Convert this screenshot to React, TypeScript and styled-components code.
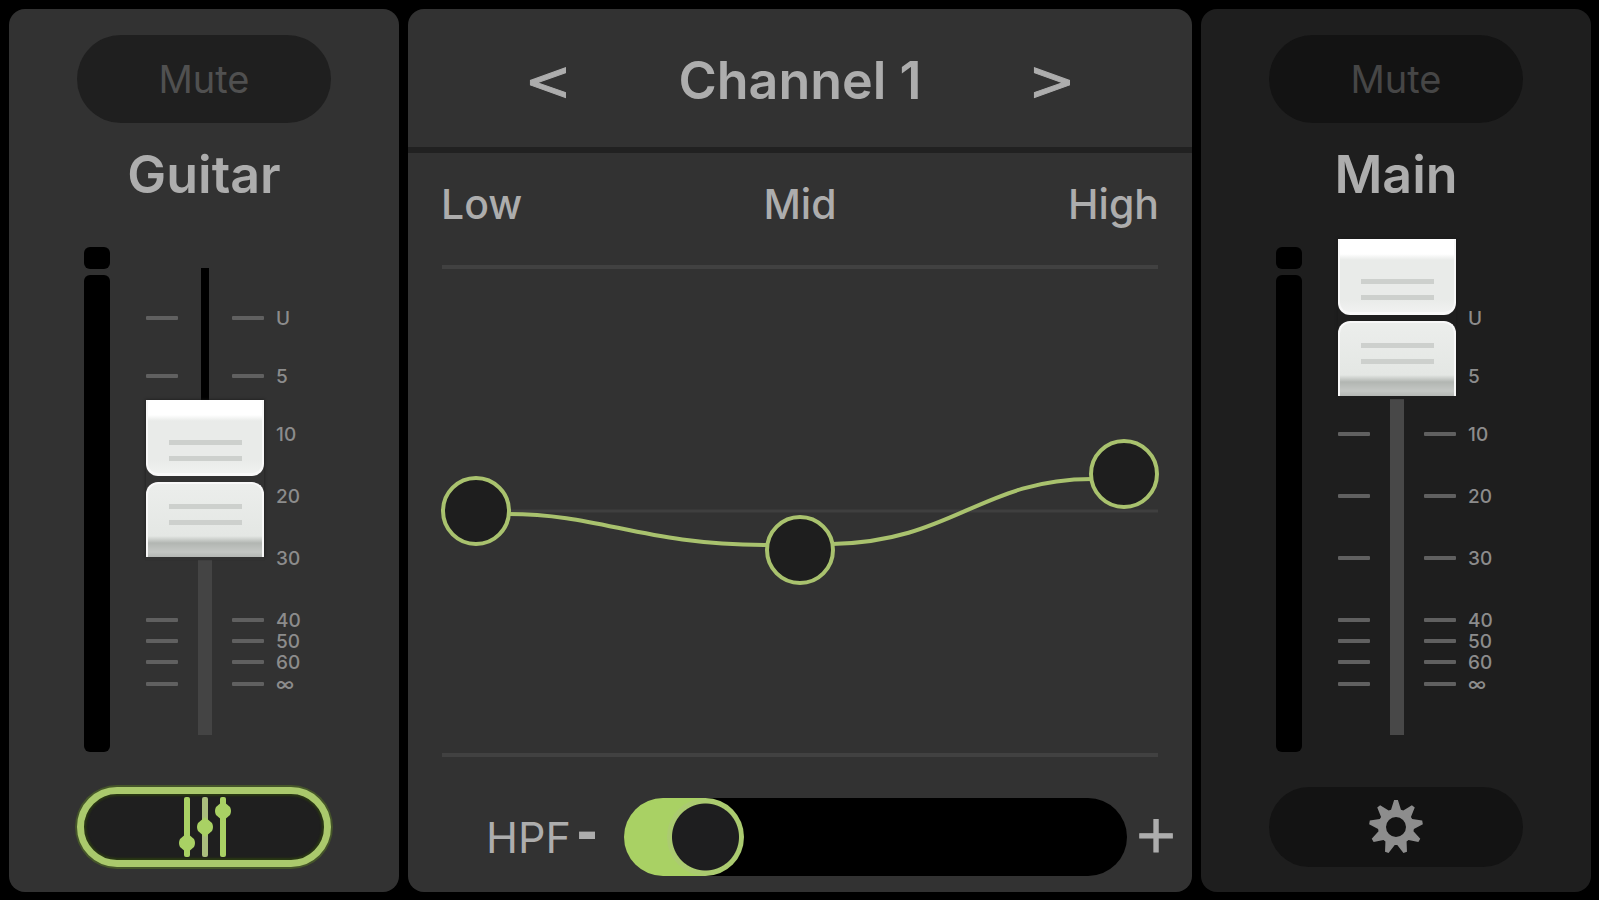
import React, { useState } from "react";
import styled, { createGlobalStyle, ThemeProvider } from "styled-components";

const channelTheme = { panel: "#323232", well: "#1f1f1f", muted: "#505050", rail: "#444444", tick: "#606060" };
const mainTheme = { panel: "#1e1e1e", well: "#131313", muted: "#464646", rail: "#484848", tick: "#606060" };

const GlobalStyle = createGlobalStyle`
  *, *::before, *::after { box-sizing: border-box; }
  body { margin: 0; background: #000; font-family: Inter, "Liberation Sans", sans-serif; color: #adadad; }
  button { font: inherit; color: inherit; border: 0; padding: 0; cursor: pointer; background: none; }
  h1, h2, ul { margin: 0; padding: 0; font: inherit; list-style: none; }
`;

const Mixer = styled.main`
  display: grid;
  grid-template-columns: 390fr 784fr 390fr;
  gap: 9px;
  min-height: 100vh;
  padding: 9px 8px 8px 9px;
`;

const Panel = styled.section`
  display: flex;
  flex-direction: column;
  min-width: 0;
  background: ${({ theme }) => theme.panel};
  border-radius: 16px;
`;

const StripPanel = styled(Panel)`
  align-items: center;
  padding: 26px 0 24px;
`;

const StripBody = styled.div`
  display: flex;
  flex-direction: column;
  width: 254px;
`;

const MuteButton = styled.button`
  height: 88px;
  border-radius: 44px;
  background: ${({ theme }) => theme.well};
  color: ${({ theme }) => theme.muted};
  font-size: 38px;
`;

const StripName = styled.h2`
  margin-top: 22px;
  line-height: 60px;
  font-size: 52px;
  font-weight: 600;
  text-align: center;
`;

const FaderArea = styled.div`
  display: grid;
  grid-template-columns: 26px 118px auto;
  column-gap: 36px;
  height: 505px;
  margin: 42px 0 0 7px;
`;

const Meter = styled.div`
  display: grid;
  grid-template-rows: 22px 1fr;
  row-gap: 6px;
`;

const MeterLamp = styled.span`
  border-radius: 6px;
  background: #000;
`;

const Fader = styled.div`
  position: relative;
  display: flex;
  justify-content: center;
  padding: 21px 0 17px;
`;

const Rail = styled.div`
  width: 14px;
  background: ${({ theme }) => theme.rail};
`;

const RailAbove = styled.div`
  width: 14px;
  border: solid ${({ theme }) => theme.panel};
  border-width: 0 3px;
  background: #000;
`;

const Scale = styled.ul`
  position: absolute;
  top: 59px;
  left: 0;
`;

const ScaleMark = styled.li<{ $gap: number }>`
  display: grid;
  grid-template-columns: 32px 32px 30px;
  column-gap: 54px;
  align-items: center;
  height: 21px;
  margin-top: ${({ $gap }) => $gap}px;
`;

const Tick = styled.span`
  height: 4px;
  border-radius: 1px;
  background: ${({ theme }) => theme.tick};
`;

const TickLabel = styled.span`
  margin-left: -42px;
  padding-top: 2px;
  font-size: 19px;
  line-height: 21px;
  font-weight: 500;
  color: #8c8c8c;
`;

const FaderInput = styled.input`
  position: absolute;
  inset: 0;
  width: 100%;
  height: 100%;
  margin: 0;
  opacity: 0;
  writing-mode: vertical-lr;
  direction: rtl;
  cursor: grab;
`;

const Cap = styled.div`
  position: absolute;
  left: 0;
  width: 118px;
  height: 157px;
  display: grid;
  grid-template-rows: 1fr 1fr;
  row-gap: 6px;
  background: linear-gradient(${({ theme }) => theme.panel}, ${({ theme }) => theme.panel}) 50% 50% / 100% 30px no-repeat;
  box-shadow: 0 3px 1px ${({ theme }) => theme.panel}, 0 0 3px #1a1a1a;
`;

const CapHalf = styled.div<{ $lower?: boolean }>`
  display: flex;
  flex-direction: column;
  align-items: center;
  gap: 11px;
  padding-top: ${({ $lower }) => ($lower ? 20 : 40)}px;
  border: solid #f8f8f8;
  border-width: ${({ $lower }) => ($lower ? "2px 2px 0" : "0 2px 3px")};
  border-radius: ${({ $lower }) => ($lower ? "12px 12px 0 0" : "0 0 12px 12px")};
  background: ${({ $lower }) =>
    $lower
      ? "linear-gradient(#eceeec 0, #e4e7e4 54px, #b2b6b2 61px, #c4c7c4 70px, #b4b7b4 100%)"
      : "linear-gradient(#fff 0, #fff 15px, #e9ebe9 21px, #e9ebe9 60px, #f2f3f2 100%)"};
  background-origin: border-box;
`;

const Groove = styled.span`
  width: 73px;
  height: 5px;
  background: #cdd0cd;
`;

const FooterButton = styled.button<{ $active?: boolean }>`
  display: flex;
  align-items: center;
  justify-content: center;
  height: 80px;
  margin-top: 35px;
  border: ${({ $active }) => ($active ? "7px solid #aac96c" : "0")};
  border-radius: 40px;
  box-shadow: ${({ $active }) => ($active ? "0 0 0 2px #45552a, inset 0 0 2px 2px #2b3a12" : "none")};
  background: ${({ theme }) => theme.well};
`;

const ChannelHeader = styled.header`
  display: flex;
  justify-content: center;
  height: 144px;
  padding-top: 5px;
  border-bottom: 6px solid #212121;
`;

const ChannelNav = styled.nav`
  display: grid;
  grid-template-columns: 100px 1fr 100px;
  align-items: center;
  width: 604px;
`;

const ChannelName = styled.h1`
  font-size: 52px;
  line-height: 60px;
  font-weight: 600;
  text-align: center;
`;

const GlyphButton = styled.button`
  display: flex;
  justify-content: center;
  font-family: "DejaVu Sans", sans-serif;
  font-size: 56px;
  line-height: 60px;
  -webkit-text-stroke: 1px currentColor;
`;

const StepButton = styled(GlyphButton)<{ $heavy?: boolean }>`
  padding-bottom: ${({ $heavy }) => ($heavy ? 10 : 6)}px;
  font-size: 52px;
  font-weight: ${({ $heavy }) => ($heavy ? 700 : 400)};
  -webkit-text-stroke-width: ${({ $heavy }) => ($heavy ? 0 : 1)}px;
`;

const BandLabels = styled.div`
  display: grid;
  grid-template-columns: 1fr auto 1fr;
  margin-top: 26px;
  padding: 0 33px;
  font-size: 41px;
  line-height: 50px;
  font-weight: 500;
`;

const Band = styled.span`
  &:last-child { text-align: right; }
`;

const EqGraph = styled.svg`
  display: block;
  margin: 31px 34px 0;
  overflow: visible;
`;

const FilterRow = styled.div`
  display: grid;
  grid-template-columns: 88px 30px 1fr 38px;
  align-items: center;
  margin-top: 34px;
  padding: 0 17px 0 76px;
`;

const FilterLabel = styled.label`
  padding-left: 2px;
  font-size: 43px;
  line-height: 50px;
`;

const FilterSlider = styled.input`
  appearance: none;
  min-width: 0;
  height: 78px;
  margin: 0 10px 0 22px;
  border-radius: 39px;
  overflow: hidden;
  background-color: #000;
  cursor: pointer;

  &::-webkit-slider-thumb {
    appearance: none;
    width: 77px;
    height: 78px;
    border-radius: 50%;
    background: radial-gradient(circle, #1e1e1f 0, #1e1e1f 33px, #abcb70 34px, #abcb70 39px);
  }
`;

const marks = [
  { label: "U", gap: 0 },
  { label: "5", gap: 37 },
  { label: "10", gap: 37 },
  { label: "20", gap: 41 },
  { label: "30", gap: 41 },
  { label: "40", gap: 41 },
  { label: "50", gap: 0 },
  { label: "60", gap: 0 },
  { label: "∞", gap: 1 },
];

function MixerIcon() {
  const bars = [
    { x: 7, y: 46, color: "#a9d164" },
    { x: 25, y: 30, color: "#a9bd7c" },
    { x: 43, y: 14, color: "#a9d164" },
  ];
  return (
    <svg width="48" height="60" viewBox="0 0 48 60" overflow="visible" aria-hidden="true">
      {bars.map(({ x, y, color }) => (
        <g key={x}>
          <rect x={x - 3} y="0" width="6" height="60" rx="2" fill={color} />
          <path d={`M${x} ${y - 10}L${x + 7} ${y - 4}Q${x + 9} ${y} ${x + 7} ${y + 4}L${x} ${y + 10}L${x - 7} ${y + 4}Q${x - 9} ${y} ${x - 7} ${y - 4}Z`} fill="#a9d164" />
        </g>
      ))}
    </svg>
  );
}

function gearPath(teeth: number) {
  const points: string[] = [];
  const at = (r: number, deg: number) => {
    const a = (deg * Math.PI) / 180;
    points.push(`${(27 + r * Math.sin(a)).toFixed(2)} ${(27 - r * Math.cos(a)).toFixed(2)}`);
  };
  for (let i = 0; i < teeth; i++) {
    const c = (i * 360) / teeth;
    at(18, c - 16);
    at(27, c - 4);
    at(27, c + 4);
    at(18, c + 16);
  }
  return `M${points.join("L")}ZM27 17a10 10 0 1 0 0 20a10 10 0 1 0 0-20Z`;
}

function GearIcon() {
  return (
    <svg width="54" height="54" viewBox="0 0 54 54" aria-hidden="true">
      <path d={gearPath(9)} fill="#8d8d8d" fillRule="evenodd" />
    </svg>
  );
}

interface StripProps {
  name: string;
  level: number;
  active?: boolean;
  action: string;
  icon: React.ReactNode;
}

function Strip({ name, level, active, action, icon }: StripProps) {
  const [value, setValue] = useState(level);
  const [muted, setMuted] = useState(false);
  const capTop = Math.round((100 - value) * 3.67) - 8;

  return (
    <StripPanel aria-label={name}>
      <StripBody>
        <MuteButton type="button" aria-pressed={muted} onClick={() => setMuted(!muted)}>Mute</MuteButton>
        <StripName>{name}</StripName>
        <FaderArea>
          <Meter aria-hidden="true">
            <MeterLamp />
            <MeterLamp />
          </Meter>
          <Fader>
            <Rail>
              <RailAbove style={{ height: Math.max(0, capTop + 58) }} />
            </Rail>
            <Scale>
              {marks.map(({ label, gap }) => (
                <ScaleMark key={label} $gap={gap}>
                  <Tick />
                  <Tick />
                  <TickLabel>{label}</TickLabel>
                </ScaleMark>
              ))}
            </Scale>
            <Cap style={{ top: capTop }}>
              <CapHalf><Groove /><Groove /></CapHalf>
              <CapHalf $lower><Groove /><Groove /></CapHalf>
            </Cap>
            <FaderInput
              type="range"
              aria-label={`${name} level`}
              min={0}
              max={100}
              value={value}
              onChange={(e) => setValue(Number(e.target.value))}
            />
          </Fader>
        </FaderArea>
        <FooterButton type="button" $active={active} aria-label={action}>{icon}</FooterButton>
      </StripBody>
    </StripPanel>
  );
}

function EqCurve() {
  const nodes = [
    { name: "Low", x: 34, y: 251 },
    { name: "Mid", x: 358, y: 290 },
    { name: "High", x: 682, y: 214 },
  ];
  return (
    <EqGraph viewBox="0 0 716 504" role="img" aria-label="Equalizer curve">
      <path d="M0 7H716M0 495H716" stroke="#414141" strokeWidth="4" />
      <path d="M0 251H716" stroke="#3f3f3f" strokeWidth="3" />
      <g fill="none" stroke="#a9c26e" strokeWidth="4">
        <path d="M66 254C160 254 200 285 326 285" />
        <path d="M390 284C510 282 540 219 650 219" />
        {nodes.map(({ name, x, y }) => (
          <circle key={name} cx={x} cy={y} r="33" fill="#1e1e1e" />
        ))}
      </g>
    </EqGraph>
  );
}

function ChannelEditor() {
  const [channel, setChannel] = useState(1);
  const [cutoff, setCutoff] = useState(10);

  return (
    <Panel aria-label="Channel editor">
      <ChannelHeader>
        <ChannelNav>
          <GlyphButton type="button" aria-label="Previous channel" onClick={() => setChannel(Math.max(1, channel - 1))}>&lt;</GlyphButton>
          <ChannelName>Channel {channel}</ChannelName>
          <GlyphButton type="button" aria-label="Next channel" onClick={() => setChannel(channel + 1)}>&gt;</GlyphButton>
        </ChannelNav>
      </ChannelHeader>
      <BandLabels>
        <Band>Low</Band>
        <Band>Mid</Band>
        <Band>High</Band>
      </BandLabels>
      <EqCurve />
      <FilterRow>
        <FilterLabel htmlFor="hpf">HPF</FilterLabel>
        <StepButton type="button" $heavy aria-label="Lower cutoff" onClick={() => setCutoff(Math.max(0, cutoff - 1))}>-</StepButton>
        <FilterSlider
          id="hpf"
          type="range"
          min={0}
          max={100}
          value={cutoff}
          onChange={(e) => setCutoff(Number(e.target.value))}
          style={{
            backgroundImage: `linear-gradient(to right, #a9d164 calc(${cutoff}% + ${39 - Math.round(cutoff * 0.78)}px), #000 0)`,
          }}
        />
        <StepButton type="button" aria-label="Raise cutoff" onClick={() => setCutoff(Math.min(100, cutoff + 1))}>+</StepButton>
      </FilterRow>
    </Panel>
  );
}

export default function App() {
  return (
    <>
      <GlobalStyle />
      <ThemeProvider theme={channelTheme}>
        <Mixer>
          <Strip name="Guitar" level={56} active action="Equalizer" icon={<MixerIcon />} />
          <ChannelEditor />
          <ThemeProvider theme={mainTheme}>
            <Strip name="Main" level={100} action="Settings" icon={<GearIcon />} />
          </ThemeProvider>
        </Mixer>
      </ThemeProvider>
    </>
  );
}
